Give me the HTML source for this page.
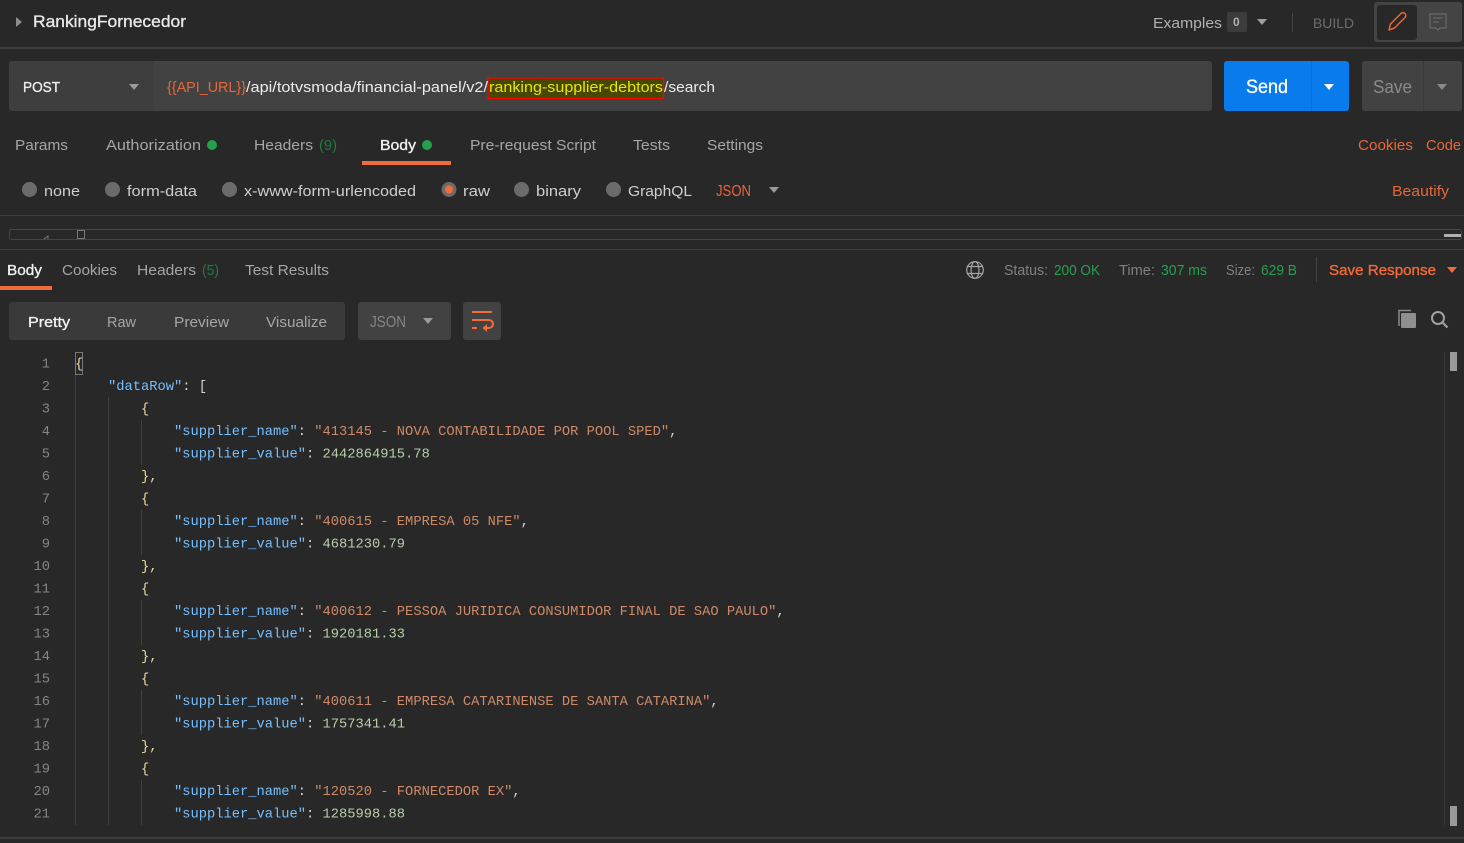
<!DOCTYPE html>
<html><head><meta charset="utf-8"><style>
html,body{margin:0;padding:0;background:#282828;width:1464px;height:843px;overflow:hidden}
svg{display:block}
text{font-family:"Liberation Sans",sans-serif;font-size:15px;fill:#a6a6a6;white-space:pre}
.sb{stroke-width:.35px}
.w{fill:#f0f0f0}
.o{fill:#e5673a}
.g{fill:#26a04e}
.d{fill:#808080}
.m text,text.m{font-family:"Liberation Mono",monospace;font-size:13.75px;fill:#d4d4d4}
.m .n{fill:#858585;text-anchor:end}
.m .k{fill:#75bfff}.m .s{fill:#ce8a68}.m .v{fill:#b5cea8}.m .y{fill:#d4d4d4}.m .c{fill:#e8dca0}
</style></head><body>
<svg width="1464" height="843" viewBox="0 0 1464 843" xmlns="http://www.w3.org/2000/svg">
<rect width="1464" height="843" fill="#282828"/>
<!-- header -->
<path d="M16 17l6 5-6 5z" fill="#8c8c8c"/>
<text x="33" y="27" class="w sb" stroke="#e8e8e8" textLength="153" lengthAdjust="spacingAndGlyphs" style="font-size:17px;fill:#e8e8e8">RankingFornecedor</text>
<text x="1153" y="28" textLength="69" lengthAdjust="spacingAndGlyphs" style="fill:#b0b0b0">Examples</text>
<rect x="1227" y="12" width="20" height="20" rx="2" fill="#3c3c3c"/>
<text x="1233" y="26" style="font-size:12px;fill:#b0b0b0;font-weight:bold">0</text>
<path d="M1257 19h10l-5 6z" fill="#a0a0a0"/>
<rect x="1292" y="13" width="1" height="19" fill="#444"/>
<text x="1313" y="28" textLength="41" lengthAdjust="spacingAndGlyphs" style="font-size:14px;fill:#6e6e6e">BUILD</text>
<rect x="1374" y="2" width="88" height="40" rx="3" fill="#444"/>
<rect x="1377" y="5" width="40" height="35" rx="3" fill="#282828"/>
<path d="M1389 30l1.500-6 10.500-10.500a2.400 2.400 0 0 1 4 4l-10.500 10.500z" fill="none" stroke="#e5673a" stroke-width="1.500" stroke-linejoin="round"/>
<path d="M1430 14h16v14h-6l-2 2-2-2h-6z" fill="none" stroke="#686868" stroke-width="1.200"/>
<path d="M1433 18h10M1433 22h6" stroke="#686868" stroke-width="1.200"/>
<rect x="0" y="47" width="1464" height="2" fill="#3c3c3c"/>
<!-- url bar -->
<rect x="9" y="61" width="1203" height="50" rx="3" fill="#424242"/>
<path d="M12 61h142v50h-142a3 3 0 0 1-3-3v-44a3 3 0 0 1 3-3z" fill="#3e3e3e"/>
<text x="23" y="92" class="sb" stroke="#eee" textLength="37" lengthAdjust="spacingAndGlyphs" style="font-size:15px;fill:#eee">POST</text>
<path d="M129 84h10l-5 6z" fill="#9a9a9a"/>
<rect x="488" y="78" width="175.500" height="20.500" fill="#474700" stroke="#f00" stroke-width="1.300"/>
<text x="167" y="92" class="o" textLength="79" lengthAdjust="spacingAndGlyphs">{{API_URL}}</text>
<text x="246" y="92" textLength="242" lengthAdjust="spacingAndGlyphs" style="fill:#ececec">/api/totvsmoda/financial-panel/v2/</text>
<text x="489" y="92" textLength="174" lengthAdjust="spacingAndGlyphs" style="fill:#e6e600">ranking-supplier-debtors</text>
<text x="664" y="92" textLength="51" lengthAdjust="spacingAndGlyphs" style="fill:#ececec">/search</text>
<rect x="1224" y="61" width="125" height="50" rx="3" fill="#097bed"/>
<rect x="1311" y="61" width="1" height="50" fill="#0a6fd6"/>
<text x="1246" y="93" class="sb" stroke="#fff" textLength="42" lengthAdjust="spacingAndGlyphs" style="font-size:19px;fill:#fff">Send</text>
<path d="M1324 84h10l-5 6z" fill="#fff"/>
<rect x="1362" y="61" width="100" height="50" rx="3" fill="#424242"/>
<rect x="1423" y="61" width="1" height="50" fill="#3a3a3a"/>
<text x="1373" y="93" textLength="39" lengthAdjust="spacingAndGlyphs" style="font-size:18px;fill:#8a8a8a">Save</text>
<path d="M1437 84h10l-5 6z" fill="#8a8a8a"/>
<!-- tabs -->
<text x="15" y="150" textLength="53" lengthAdjust="spacingAndGlyphs">Params</text>
<text x="106" y="150" textLength="95" lengthAdjust="spacingAndGlyphs">Authorization</text>
<circle cx="212" cy="145" r="5" fill="#26a04e"/>
<text x="254" y="150" textLength="59" lengthAdjust="spacingAndGlyphs">Headers</text>
<text x="319" y="150" textLength="18" lengthAdjust="spacingAndGlyphs" style="fill:#1f7a3d">(9)</text>
<text x="380" y="150" class="w sb" stroke="#f0f0f0" textLength="36" lengthAdjust="spacingAndGlyphs">Body</text>
<circle cx="427" cy="145" r="5" fill="#26a04e"/>
<rect x="362" y="161" width="89" height="4" fill="#f26b3a"/>
<text x="470" y="150" textLength="126" lengthAdjust="spacingAndGlyphs">Pre-request Script</text>
<text x="633" y="150" textLength="37" lengthAdjust="spacingAndGlyphs">Tests</text>
<text x="707" y="150" textLength="56" lengthAdjust="spacingAndGlyphs">Settings</text>
<text x="1358" y="150" class="o" textLength="55" lengthAdjust="spacingAndGlyphs">Cookies</text>
<text x="1426" y="150" class="o" textLength="35" lengthAdjust="spacingAndGlyphs">Code</text>
<!-- radios -->
<g fill="#6b6b6b">
<circle cx="29.500" cy="189.500" r="7.500"/><circle cx="112.500" cy="189.500" r="7.500"/><circle cx="229.500" cy="189.500" r="7.500"/><circle cx="449" cy="189.500" r="7.500"/><circle cx="521.500" cy="189.500" r="7.500"/><circle cx="613.500" cy="189.500" r="7.500"/>
</g>
<circle cx="449" cy="189.500" r="4" fill="#f26b3a"/>
<text x="44" y="196" textLength="36" lengthAdjust="spacingAndGlyphs" style="fill:#cfcfcf">none</text>
<text x="127" y="196" textLength="70" lengthAdjust="spacingAndGlyphs" style="fill:#cfcfcf">form-data</text>
<text x="244" y="196" textLength="172" lengthAdjust="spacingAndGlyphs" style="fill:#cfcfcf">x-www-form-urlencoded</text>
<text x="463" y="196" textLength="27" lengthAdjust="spacingAndGlyphs" style="fill:#cfcfcf">raw</text>
<text x="536" y="196" textLength="45" lengthAdjust="spacingAndGlyphs" style="fill:#cfcfcf">binary</text>
<text x="628" y="196" textLength="64" lengthAdjust="spacingAndGlyphs" style="fill:#cfcfcf">GraphQL</text>
<text x="716" y="196" class="o" textLength="35" lengthAdjust="spacingAndGlyphs" style="font-size:16px">JSON</text>
<path d="M769 187h10l-5 6z" fill="#9a9a9a"/>
<text x="1392" y="196" class="o" textLength="57" lengthAdjust="spacingAndGlyphs">Beautify</text>
<rect x="0" y="215" width="1464" height="1" fill="#3f3f3f"/>
<!-- collapsed editor -->
<rect x="9.500" y="229.500" width="1452" height="10" rx="2" fill="none" stroke="#454545"/>
<rect x="77.500" y="230.500" width="7" height="8" fill="none" stroke="#777"/>
<path d="M44 239l4-3v3" fill="none" stroke="#777"/>
<rect x="1444" y="234" width="17" height="3" fill="#b0b0b0"/>
<rect x="0" y="249" width="1464" height="1" fill="#3f3f3f"/>
<!-- response tabs -->
<text x="7" y="275" class="w sb" stroke="#f0f0f0" textLength="35" lengthAdjust="spacingAndGlyphs">Body</text>
<rect x="0" y="286" width="52" height="4" fill="#f26b3a"/>
<text x="62" y="275" textLength="55" lengthAdjust="spacingAndGlyphs">Cookies</text>
<text x="137" y="275" textLength="59" lengthAdjust="spacingAndGlyphs">Headers</text>
<text x="202" y="275" textLength="17" lengthAdjust="spacingAndGlyphs" style="fill:#1f7a3d">(5)</text>
<text x="245" y="275" textLength="84" lengthAdjust="spacingAndGlyphs">Test Results</text>
<g fill="none" stroke="#a6a6a6" stroke-width="1.200">
<circle cx="975" cy="270" r="8.300"/><ellipse cx="975" cy="270" rx="4" ry="8.300"/><path d="M967.500 266.500h15M967.500 273.500h15"/>
</g>
<text x="1004" y="275" class="d" textLength="44" lengthAdjust="spacingAndGlyphs" style="font-size:15px">Status:</text>
<text x="1054" y="275" textLength="46" lengthAdjust="spacingAndGlyphs" style="font-size:15px;fill:#26a04e">200 OK</text>
<text x="1119" y="275" class="d" textLength="36" lengthAdjust="spacingAndGlyphs" style="font-size:15px">Time:</text>
<text x="1161" y="275" textLength="46" lengthAdjust="spacingAndGlyphs" style="font-size:15px;fill:#26a04e">307 ms</text>
<text x="1226" y="275" class="d" textLength="29" lengthAdjust="spacingAndGlyphs" style="font-size:15px">Size:</text>
<text x="1261" y="275" textLength="36" lengthAdjust="spacingAndGlyphs" style="font-size:15px;fill:#26a04e">629 B</text>
<rect x="1316" y="257" width="1" height="25" fill="#444"/>
<text x="1329" y="275" class="sb" stroke="#f26b3a" textLength="107" lengthAdjust="spacingAndGlyphs" style="fill:#f26b3a">Save Response</text>
<path d="M1447 267h10l-5 6z" fill="#f26b3a"/>
<!-- view bar -->
<rect x="9" y="302" width="336" height="38" rx="3" fill="#3a3a3a"/>
<text x="28" y="327" class="w sb" stroke="#f0f0f0" textLength="42" lengthAdjust="spacingAndGlyphs">Pretty</text>
<text x="107" y="327" textLength="29" lengthAdjust="spacingAndGlyphs">Raw</text>
<text x="174" y="327" textLength="55" lengthAdjust="spacingAndGlyphs">Preview</text>
<text x="266" y="327" textLength="61" lengthAdjust="spacingAndGlyphs">Visualize</text>
<rect x="358" y="302" width="93" height="38" rx="3" fill="#424242"/>
<text x="370" y="327" textLength="36" lengthAdjust="spacingAndGlyphs" style="fill:#858585;font-size:16px">JSON</text>
<path d="M423 318h10l-5 6z" fill="#9a9a9a"/>
<rect x="463" y="302" width="38" height="38" rx="3" fill="#424242"/>
<path d="M472 312h20M472 320h17a3.500 3.500 0 0 1 0 8h-4M472 328h5" fill="none" stroke="#f26b3a" stroke-width="2"/>
<path d="M487 324v8l-4.500-4z" fill="#f26b3a"/>
<path d="M1399 326v-15.500h12" fill="none" stroke="#8a8a8a" stroke-width="1.500"/>
<rect x="1401" y="313" width="15" height="15" rx="1" fill="#8f8f8f"/>
<circle cx="1438" cy="318" r="6" fill="none" stroke="#a0a0a0" stroke-width="2"/>
<path d="M1442.500 322.500l5 5" stroke="#a0a0a0" stroke-width="2.200"/>
<!-- guides -->
<g fill="#404040">
<rect x="75" y="375" width="1" height="450"/>
<rect x="108" y="397" width="1" height="428"/>
<rect x="141" y="420" width="1" height="45"/><rect x="141" y="510" width="1" height="45"/><rect x="141" y="600" width="1" height="45"/><rect x="141" y="690" width="1" height="45"/><rect x="141" y="780" width="1" height="45"/>
</g>
<rect x="1444" y="352" width="1" height="473" fill="#383838"/>
<rect x="75.500" y="352.500" width="7" height="22" fill="none" stroke="#777"/>
<rect x="1450" y="352" width="7" height="19" fill="#9a9a9a"/>
<rect x="1450" y="806" width="7" height="20" fill="#9a9a9a"/>
<!-- code -->
<g class="m" transform="translate(0,-0.500)">
<text class="n" x="50" y="368">1</text><text class="n" x="50" y="390.500">2</text><text class="n" x="50" y="413">3</text><text class="n" x="50" y="435.500">4</text><text class="n" x="50" y="458">5</text><text class="n" x="50" y="480.500">6</text><text class="n" x="50" y="503">7</text><text class="n" x="50" y="525.500">8</text><text class="n" x="50" y="548">9</text><text class="n" x="50" y="570.500">10</text><text class="n" x="50" y="593">11</text><text class="n" x="50" y="615.500">12</text><text class="n" x="50" y="638">13</text><text class="n" x="50" y="660.500">14</text><text class="n" x="50" y="683">15</text><text class="n" x="50" y="705.500">16</text><text class="n" x="50" y="728">17</text><text class="n" x="50" y="750.500">18</text><text class="n" x="50" y="773">19</text><text class="n" x="50" y="795.500">20</text><text class="n" x="50" y="818">21</text>
<text x="75" y="368" class="c">{</text>
<text x="108" y="390.500"><tspan class="k">"dataRow"</tspan>: [</text>
<text x="141" y="413" class="c">{</text>
<text x="174" y="435.500"><tspan class="k">"supplier_name"</tspan>: <tspan class="s">"413145 - NOVA CONTABILIDADE POR POOL SPED"</tspan>,</text>
<text x="174" y="458"><tspan class="k">"supplier_value"</tspan>: <tspan class="v">2442864915.78</tspan></text>
<text x="141" y="480.500" class="c">},</text>
<text x="141" y="503" class="c">{</text>
<text x="174" y="525.500"><tspan class="k">"supplier_name"</tspan>: <tspan class="s">"400615 - EMPRESA 05 NFE"</tspan>,</text>
<text x="174" y="548"><tspan class="k">"supplier_value"</tspan>: <tspan class="v">4681230.79</tspan></text>
<text x="141" y="570.500" class="c">},</text>
<text x="141" y="593" class="c">{</text>
<text x="174" y="615.500"><tspan class="k">"supplier_name"</tspan>: <tspan class="s">"400612 - PESSOA JURIDICA CONSUMIDOR FINAL DE SAO PAULO"</tspan>,</text>
<text x="174" y="638"><tspan class="k">"supplier_value"</tspan>: <tspan class="v">1920181.33</tspan></text>
<text x="141" y="660.500" class="c">},</text>
<text x="141" y="683" class="c">{</text>
<text x="174" y="705.500"><tspan class="k">"supplier_name"</tspan>: <tspan class="s">"400611 - EMPRESA CATARINENSE DE SANTA CATARINA"</tspan>,</text>
<text x="174" y="728"><tspan class="k">"supplier_value"</tspan>: <tspan class="v">1757341.41</tspan></text>
<text x="141" y="750.500" class="c">},</text>
<text x="141" y="773" class="c">{</text>
<text x="174" y="795.500"><tspan class="k">"supplier_name"</tspan>: <tspan class="s">"120520 - FORNECEDOR EX"</tspan>,</text>
<text x="174" y="818"><tspan class="k">"supplier_value"</tspan>: <tspan class="v">1285998.88</tspan></text>
</g>
<rect x="0" y="837" width="1464" height="2" fill="#3c3c3c"/>
</svg>
</body></html>
